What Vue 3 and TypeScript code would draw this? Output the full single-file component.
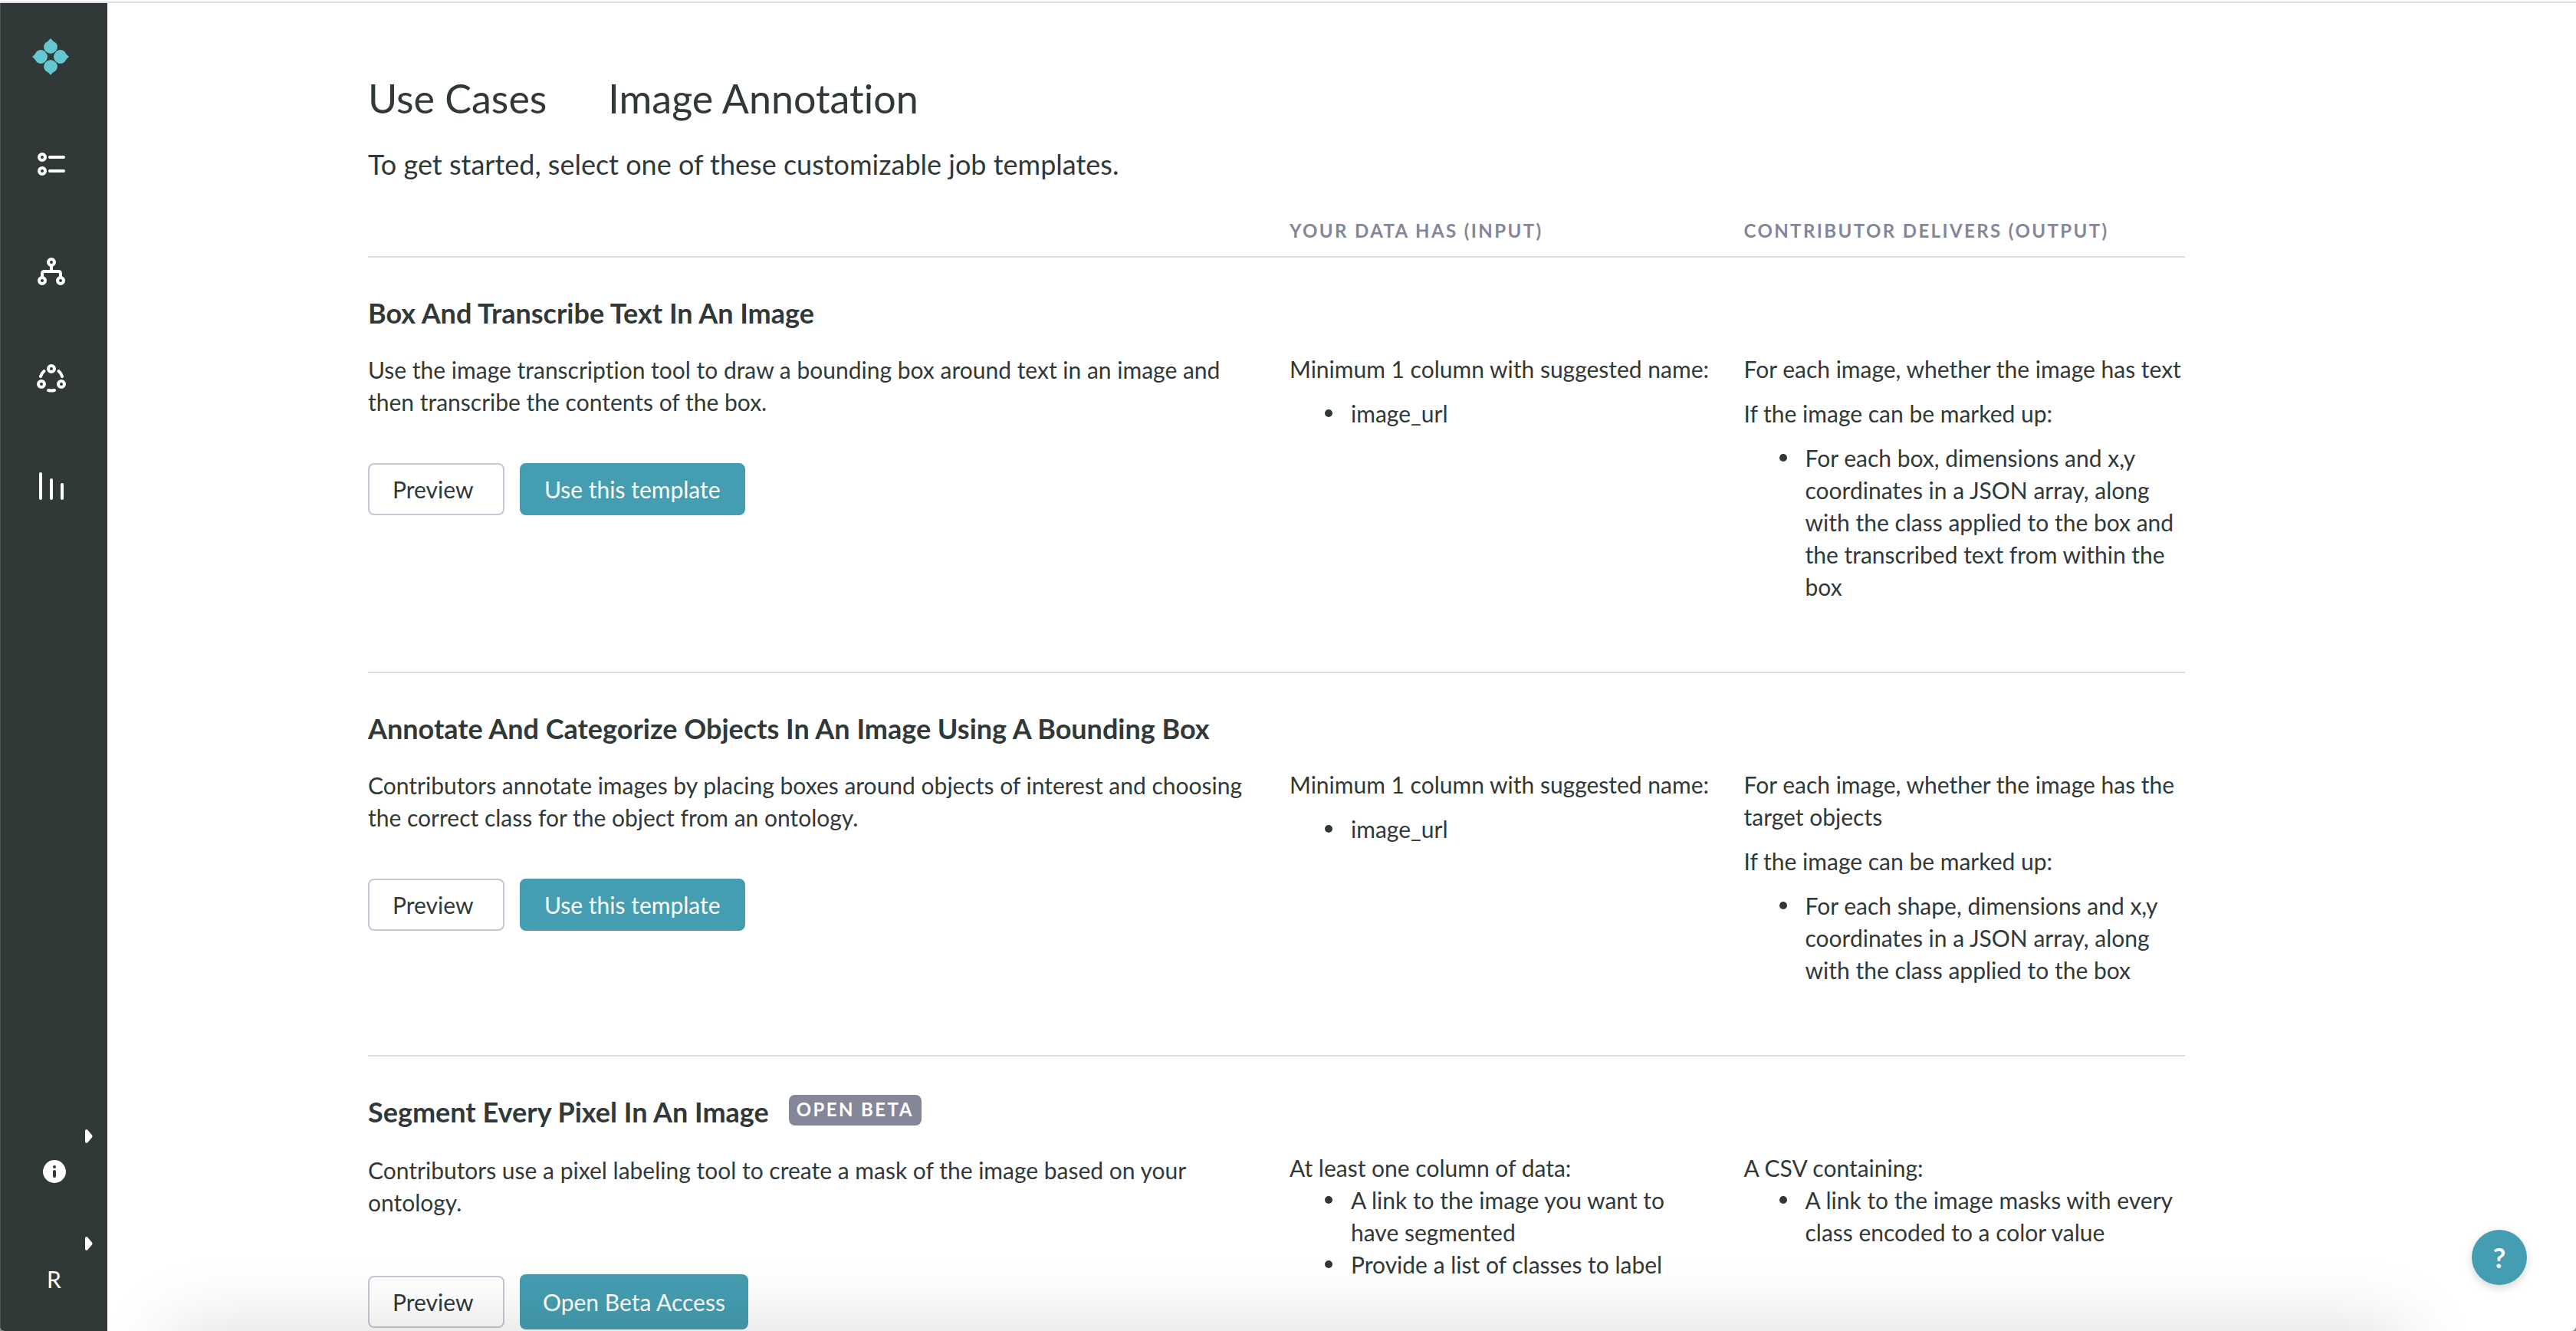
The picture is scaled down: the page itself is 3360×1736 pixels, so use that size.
<script setup lang="ts">
type Block = { kind: 'text'; text: string } | { kind: 'list'; items: string[] }

interface JobTemplate {
  title: string
  badge?: string
  description: string
  action: string
  compact?: boolean
  input: Block[]
  output: Block[]
}

const text = (value: string): Block => ({ kind: 'text', text: value })
const list = (...items: string[]): Block => ({ kind: 'list', items })

const templates: JobTemplate[] = [
  {
    title: 'Box And Transcribe Text In An Image',
    description:
      'Use the image transcription tool to draw a bounding box around text in an image and then transcribe the contents of the box.',
    action: 'Use this template',
    input: [text('Minimum 1 column with suggested name:'), list('image_url')],
    output: [
      text('For each image, whether the image has text'),
      text('If the image can be marked up:'),
      list(
        'For each box, dimensions and x,y coordinates in a JSON array, along with the class applied to the box and the transcribed text from within the box',
      ),
    ],
  },
  {
    title: 'Annotate And Categorize Objects In An Image Using A Bounding Box',
    description:
      'Contributors annotate images by placing boxes around objects of interest and choosing the correct class for the object from an ontology.',
    action: 'Use this template',
    input: [text('Minimum 1 column with suggested name:'), list('image_url')],
    output: [
      text('For each image, whether the image has the target objects'),
      text('If the image can be marked up:'),
      list(
        'For each shape, dimensions and x,y coordinates in a JSON array, along with the class applied to the box',
      ),
    ],
  },
  {
    title: 'Segment Every Pixel In An Image',
    badge: 'Open Beta',
    description:
      'Contributors use a pixel labeling tool to create a mask of the image based on your ontology.',
    action: 'Open Beta Access',
    compact: true,
    input: [
      text('At least one column of data:'),
      list('A link to the image you want to have segmented', 'Provide a list of classes to label'),
    ],
    output: [
      text('A CSV containing:'),
      list('A link to the image masks with every class encoded to a color value'),
    ],
  },
]
</script>

<template>
  <div class="app">
    <nav class="sidebar" aria-label="Main">
      <a href="#" class="item" aria-label="Home">
        <svg width="50" height="50" viewBox="1 0 50 50" fill="#65c8d0">
          <g v-for="angle in [0, 90, 180, 270]" :key="angle" :transform="`rotate(${angle} 25 25)`">
            <path d="M25 1Q28 5 32 7A9 9 0 0 1 32 17.500Q28.500 21 25 21T18 17.500A9 9 0 0 1 18 7Q22 5 25 1Z" />
          </g>
        </svg>
      </a>
      <a href="#" class="item" aria-label="Jobs">
        <svg width="40" height="40" viewBox="0 0 40 40" class="line">
          <circle cx="8" cy="11" r="4" />
          <circle cx="8" cy="29" r="4" />
          <path d="M18 11H36M18 29H36" />
        </svg>
      </a>
      <a href="#" class="item" aria-label="Workflows">
        <svg width="40" height="40" viewBox="0 0 40 40" class="line">
          <circle cx="20" cy="8" r="4" />
          <circle cx="8" cy="32" r="4" />
          <circle cx="32" cy="32" r="4" />
          <path d="M20 12V20M8 28V23Q8 20 11 20H29Q32 20 32 23V28" />
        </svg>
      </a>
      <a href="#" class="item" aria-label="Contributors">
        <svg width="40" height="40" viewBox="0 0 40 40" class="line">
          <circle cx="20" cy="7" r="4" />
          <circle cx="7" cy="27" r="4" />
          <circle cx="33" cy="27" r="4" />
          <path d="M10.500 10Q7 13 6 17M29.500 10Q33 13 34 17M16 35Q20 36 24 35" />
        </svg>
      </a>
      <a href="#" class="item" aria-label="Reports">
        <svg width="40" height="40" viewBox="0 0 40 40" class="line">
          <path d="M6 4V36M20 12V36M34 18V36" />
        </svg>
      </a>

      <div class="account">
        <button type="button" class="menu" aria-label="Information">
          <svg class="caret" width="10" height="18" viewBox="0 0 10 18" fill="#fff">
            <path d="M0 2Q0 0 2 0L3 0.500L9 7.500Q10 9 9 10.500L3 17.500Q0 18.500 0 16Z" />
          </svg>
          <svg width="30" height="30" viewBox="0 0 30 30">
            <circle cx="15" cy="15" r="15" fill="#fff" />
            <circle cx="15" cy="9" r="2" fill="#313938" />
            <path d="M15 15V21" stroke="#313938" stroke-width="4" stroke-linecap="round" />
          </svg>
        </button>
        <button type="button" class="menu">
          <svg class="caret" width="10" height="18" viewBox="0 0 10 18" fill="#fff">
            <path d="M0 2Q0 0 2 0L3 0.500L9 7.500Q10 9 9 10.500L3 17.500Q0 18.500 0 16Z" />
          </svg>
          R
        </button>
      </div>
    </nav>

    <main class="content">
      <header class="heading">
        <h1><a href="#">Use Cases</a></h1>
        <h1>Image Annotation</h1>
      </header>
      <p class="intro">To get started, select one of these customizable job templates.</p>

      <table class="templates">
        <thead>
          <tr>
            <th scope="col" class="summary"></th>
            <th scope="col">Your data has (input)</th>
            <th scope="col">Contributor delivers (output)</th>
          </tr>
        </thead>
        <tbody>
          <tr v-for="item in templates" :key="item.title" :class="{ compact: item.compact }">
            <td class="summary">
              <div class="title">
                <h2>{{ item.title }}</h2>
                <span v-if="item.badge" class="badge">{{ item.badge }}</span>
              </div>
              <p class="description">{{ item.description }}</p>
              <div class="actions">
                <button type="button" class="button preview">Preview</button>
                <button type="button" class="button primary">{{ item.action }}</button>
              </div>
            </td>
            <td v-for="(blocks, side) in [item.input, item.output]" :key="side" class="details">
              <template v-for="(block, index) in blocks" :key="index">
                <p v-if="block.kind === 'text'">{{ block.text }}</p>
                <ul v-else>
                  <li v-for="entry in block.items" :key="entry">{{ entry }}</li>
                </ul>
              </template>
            </td>
          </tr>
        </tbody>
      </table>
    </main>

    <div class="drawer-shadow" aria-hidden="true"></div>
    <button type="button" class="help" aria-label="Help">?</button>
  </div>
</template>

<style>
body {
  margin: 0;
  background: #8c8c8c;
}
</style>

<style scoped>
.app {
  position: relative;
  box-sizing: border-box;
  display: flex;
  height: 100vh;
  padding-top: 4px;
  overflow: hidden;
  border-radius: 0 0 6px 6px;
  background: linear-gradient(#fff 0 2px, #dcdce4 2px 4px, #fff 4px);
  color: #313938;
  font-family: Lato, sans-serif;
  font-size: 30px;
  font-variant-ligatures: none;
  line-height: 42px;
}

h1,
h2,
p,
ul {
  margin: 0;
}

a {
  color: inherit;
  text-decoration: none;
}

button {
  box-sizing: border-box;
  cursor: pointer;
  font: inherit;
  font-variant-ligatures: none;
}

.sidebar {
  box-sizing: border-box;
  display: flex;
  flex: none;
  flex-direction: column;
  width: 140px;
  border-left: 1px solid #4c5453;
  background: #313938;
}

.item {
  display: flex;
  align-items: center;
  justify-content: center;
  height: 140px;
  padding-right: 8px;
}

.line {
  fill: none;
  stroke: #fff;
  stroke-width: 4;
  stroke-linecap: round;
}

.account {
  margin-top: auto;
}

.menu {
  position: relative;
  display: flex;
  align-items: center;
  justify-content: center;
  width: 100%;
  height: 140px;
  padding: 4px 0 0;
  border: 0;
  background: none;
  color: #fff;
}

.caret {
  position: absolute;
  top: 17px;
  right: 19px;
}

.content {
  flex: 1;
  min-width: 0;
  padding: 92px 340px 0;
}

.heading {
  display: flex;
  gap: 80px;
}

.heading h1 {
  font-size: 52px;
  font-weight: 400;
  line-height: 64px;
}

.intro {
  margin-top: 30px;
  font-size: 36px;
  line-height: 48px;
}

.templates {
  width: 100%;
  max-width: 2370px;
  margin-top: 32px;
  border-spacing: 0;
  table-layout: fixed;
}

th,
td {
  box-sizing: border-box;
  border-bottom: 2px solid #dcdce4;
}

th {
  height: 66px;
  padding: 0 0 2px 17px;
  color: #84869a;
  font-size: 24px;
  font-weight: 700;
  letter-spacing: 0.1em;
  line-height: 32px;
  text-align: left;
  text-transform: uppercase;
}

td {
  padding: 0 0 90px;
  vertical-align: top;
}

.summary {
  width: 50%;
}

td.summary {
  padding: 47px 40px 47px 0;
}

.title {
  display: flex;
  gap: 26px;
}

.title h2 {
  font-size: 36px;
  font-weight: 700;
  line-height: 50px;
}

.badge {
  height: 40px;
  margin-top: 3px;
  padding: 0 10px;
  border-radius: 8px;
  background: #84869a;
  color: #fff;
  font-size: 24px;
  font-weight: 700;
  letter-spacing: 0.1em;
  line-height: 38px;
  text-transform: uppercase;
}

.description {
  margin-top: 28px;
}

.actions {
  display: flex;
  align-items: center;
  gap: 20px;
  margin-top: 59px;
}

.button {
  height: 68px;
  padding: 0 30px;
  border: 2px solid #c5c7d4;
  border-radius: 8px;
  background: none;
  color: #313938;
}

.preview {
  min-width: 178px;
  text-align: left;
}

.primary {
  border-color: #459db1;
  background: #459db1;
  color: #fff;
}

.compact .description {
  margin-top: 30px;
}

.compact .actions {
  margin-top: 73px;
}

.compact .primary {
  height: 72px;
  padding: 0 28px;
}

.details {
  padding-top: 124px;
  padding-left: 17px;
  padding-right: 20px;
}

.details:last-child {
  padding-right: 0;
}

.details p {
  margin-bottom: 16px;
}

.compact .details p {
  margin-bottom: 0;
}

.details ul {
  padding-left: 46px;
  list-style: none;
}

.details li {
  display: flex;
  gap: 24px;
}

.details li::before {
  flex: none;
  width: 10px;
  height: 10px;
  margin-top: 16px;
  border-radius: 50%;
  background: currentColor;
  content: '';
}

.drawer-shadow {
  position: absolute;
  top: 100%;
  left: 224px;
  right: 224px;
  height: 200px;
  box-shadow: 0 0 100px rgba(0, 0, 0, 0.15);
  pointer-events: none;
}

.help {
  position: absolute;
  right: 64px;
  bottom: 60px;
  width: 72px;
  height: 72px;
  padding: 0;
  border: 0;
  border-radius: 50%;
  background: #459db1;
  box-shadow: 0 4px 12px rgba(0, 0, 0, 0.16);
  color: #fff;
  font-size: 36px;
  font-weight: 700;
}
</style>
